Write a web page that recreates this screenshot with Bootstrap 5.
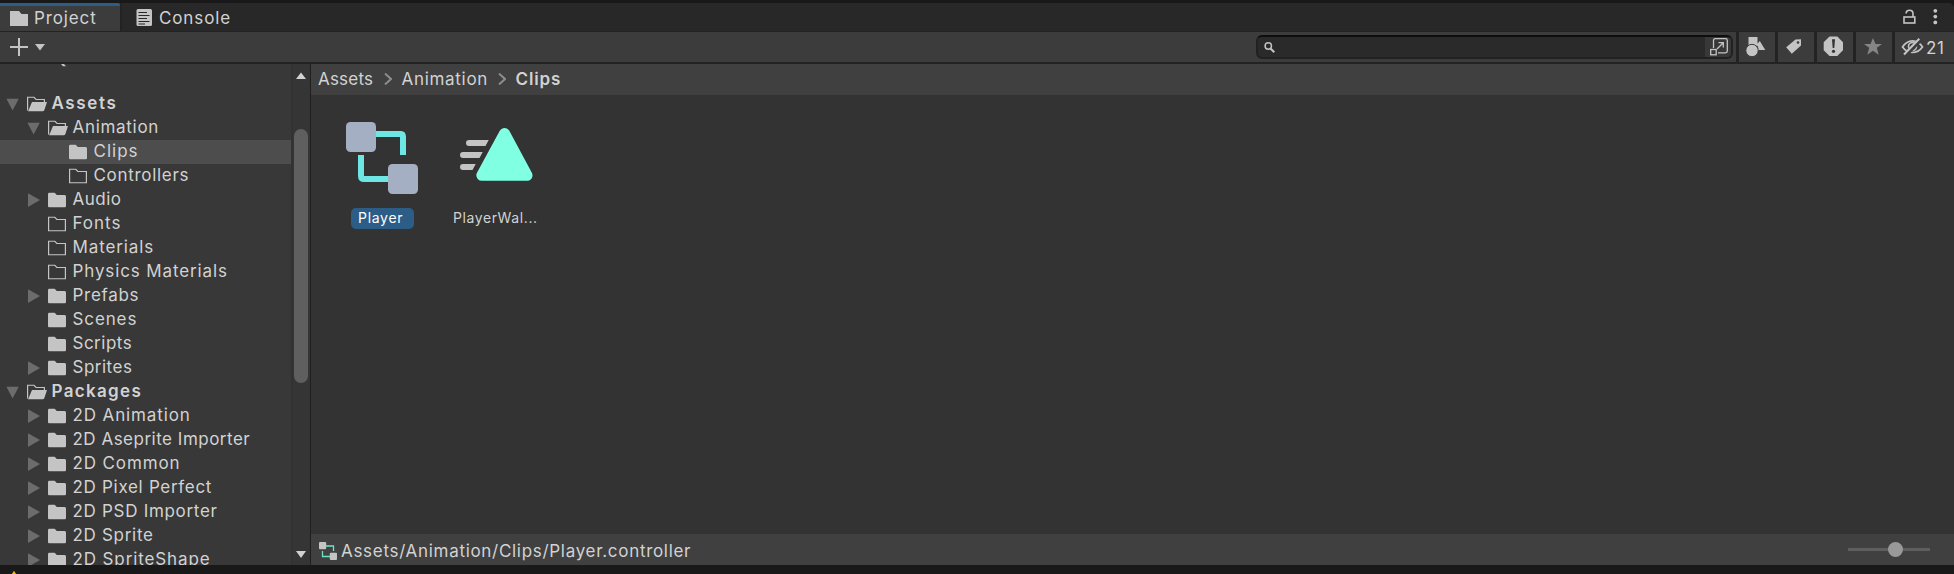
<!DOCTYPE html>
<html lang="en">
<head>
<meta charset="utf-8">
<title>Project</title>
<link rel="stylesheet" href="https://cdn.jsdelivr.net/npm/bootstrap@5.3.0/dist/css/bootstrap.min.css">
<style>
:root{--line:#232323;--ink:#c4c4c4}
body{background:#191919;color:#d2d2d2;font-family:Inter,"Liberation Sans",sans-serif;font-size:17px;line-height:21px;letter-spacing:.7px;width:1954px;height:574px}
svg{display:block;flex:none;overflow:visible}
.t5{letter-spacing:.5px}.t9{letter-spacing:.88px}.t10{letter-spacing:1px}
.t13{letter-spacing:1.34px}.t16{letter-spacing:1.63px}.t2{letter-spacing:.2px}
.semi{font-weight:600}
.tabstrip{height:29px;margin-top:3px;background:#282828;border-bottom:1px solid var(--line);border-top-right-radius:5px}
.tab-on{width:120px;background:#3c3c3c;border-top:3px solid #2c5d87;border-top-right-radius:2px;padding-left:10px}
.tab-off{border-left:2px solid var(--line);padding:3px 0 0 14px}
.toolbar{height:32px;background:#3c3c3c;border-bottom:2px solid var(--line)}
.searchbox{width:477px;height:24px;margin:3px 3px 0 0;background:#2a2a2a;border:2px solid #212121;border-top-color:#0d0d0d;border-radius:6px;padding-left:6px;overflow:hidden}
.expand{width:26px;background:#383838;height:20px;padding-left:3px}
.tool{width:39px;border-left:3px solid var(--line);height:30px}
.main{height:501px}
.tree{width:291px;background:#383838}
.treerow{height:24px}
.treerow span{line-height:23px;height:24px;white-space:nowrap}
.chosen{background:#4d4d4d}
.scroller{width:19px;background:#353535;border-left:2px solid #323232}
.thumb{width:14px;height:254px;border-radius:7px;background:#5f5f5f;margin-top:50px}
.content{background:#333;border-left:1px solid #1f1f1f}
.crumbs,.status{height:31px;background:#404040}
.crumbs span{margin-top:5px}
.assets{padding:23px 0 0 20px}
.asset{width:110px;font-size:14px;letter-spacing:.6px}
.caption{height:21px;line-height:20px;padding:0 7px}
.picked{background:#2c5d87;color:#fff;border-radius:5px;width:63px;padding:0 0 0 7px;letter-spacing:.7px}
.track{width:82px;height:3px;background:#5e5e5e;margin-right:24px}
.knob{width:15px;height:15px;border-radius:50%;background:#999;margin-left:40px;top:-6px}
</style>
<script src="https://cdn.jsdelivr.net/npm/bootstrap@5.3.0/dist/js/bootstrap.bundle.min.js"></script>
</head>
<body class="overflow-hidden m-0">
<svg width="0" height="0" class="position-absolute" aria-hidden="true">
  <symbol id="full" viewBox="0 0 18 15"><path d="M0 1.5Q0 0 1.5 0H6.5L8.8 2.5H16.6Q18 2.5 18 4V13.5Q18 15 16.5 15H1.5Q0 15 0 13.5Z" fill="#c4c4c4"/></symbol>
  <symbol id="hollow" viewBox="0 0 18 15"><path d="M.6.6H6.6L8.8 3H17.4V14.4H.6Z" fill="none" stroke="#c4c4c4" stroke-width="1.2"/></symbol>
  <symbol id="open" viewBox="0 0 20 15"><path d="M.6 14V.6H6.8L9 3H17.4V6" fill="none" stroke="#c4c4c4" stroke-width="1.2"/><path d="M5 5.5H20L17.4 13.6Q17 15 15.5 15H1Z" fill="#c4c4c4"/></symbol>
  <symbol id="shut" viewBox="0 0 12 14"><path d="M0 0L12 6.8L0 13.6Z" fill="#6c6c6c"/></symbol>
  <symbol id="down" viewBox="0 0 13 12"><path d="M0 0H12.6L6.3 12Z" fill="#6c6c6c"/></symbol>
  <symbol id="chev" viewBox="0 0 8 12"><path d="M1 .6L7 6L1 11.4" fill="none" stroke="#8e8e8e" stroke-width="2"/></symbol>
</svg>

<div class="tabstrip d-flex">
  <div class="tab-on d-flex">
    <svg width="18" height="15" style="margin-top:5px"><path d="M0 0H9L11.5 3H18V15H0Z" fill="#c4c4c4"/></svg>
    <span class="t9" style="padding-left:6px;margin-top:2px">Project</span>
  </div>
  <div class="tab-off d-flex">
    <svg width="16" height="17" style="margin-top:3px"><rect x=".5" width="15.5" height="17" rx="1.5" fill="#c4c4c4"/><path d="M2.5 3.5H11M2.5 6.5H13.5M2.5 9.5H11M2.5 12.5H13.5M2.5 15H9" stroke="#282828" stroke-width="1.2"/></svg>
    <span class="t9" style="padding-left:7px;margin-top:2px">Console</span>
  </div>
  <svg class="ms-auto" width="51" height="28"><g fill="none" stroke="#c4c4c4" stroke-width="1.6"><rect x="1" y="14" width="10.8" height="6"/><path d="M3.2 10.5V9.8Q3.5 7.2 6.5 7.2Q10 7.2 10 10.5V14"/></g><g fill="#c4c4c4"><circle cx="32.3" cy="7.8" r="1.9"/><circle cx="32.3" cy="13.6" r="1.9"/><circle cx="32.3" cy="19.4" r="1.9"/></g></svg>
</div>

<div class="toolbar d-flex">
  <svg width="60" height="30"><path d="M19 6V24M10 15H28" stroke="#c4c4c4" stroke-width="2"/><path d="M35 12H45L40 18.5Z" fill="#c4c4c4"/></svg>
  <div class="searchbox d-flex ms-auto">
    <svg width="12" height="20"><circle cx="4.3" cy="9" r="3.2" fill="none" stroke="#c4c4c4" stroke-width="1.5"/><path d="M6.5 11.5L10.3 15.3" stroke="#c4c4c4" stroke-width="2"/></svg>
    <div class="expand ms-auto"><svg width="20" height="20" style="margin-left:1px"><g fill="none" stroke="#c4c4c4" stroke-width="1.3"><path d="M4.5 11V3.5Q4.5 1.7 6.3 1.7H16.5Q18.3 1.7 18.3 3.5V14Q18.3 15.8 16.5 15.8H9"/><rect x="1.7" y="12.5" width="5.5" height="5.3"/><path d="M8 12L14 6M9.5 5.6H14.3V10.4"/></g></svg></div>
  </div>
  <div class="tool"><svg width="36" height="30" fill="#c4c4c4"><path d="M9.5 5H18.5V13.8H9.5ZM20.8 9L26.3 18H19Q19.8 14.5 17.5 12.8Z"/><circle cx="13" cy="18.5" r="6.2" stroke="#3c3c3c"/></svg></div>
  <div class="tool"><svg width="36" height="30"><path d="M17.5 8L23 7.8V14L13.8 22.3L8.2 15.7Z" transform="translate(0 -.5)" fill="#c4c4c4"/><circle cx="20" cy="10.5" r="1.3" fill="#3c3c3c"/></svg></div>
  <div class="tool"><svg width="36" height="30"><path d="M12.5 4.5H20.3L26 10.3V18.2L20.3 24H12.5L6.7 18.2V10.3Z" fill="#c4c4c4"/><path d="M15 7.3H18L17.3 16H15.7Z" fill="#333"/><circle cx="16.5" cy="19.3" r="1.6" fill="#333"/></svg></div>
  <div class="tool"><svg width="36" height="30"><path d="M17 6L19.5 12H26L20.8 15.7L22.7 22.7L17 18.7L11.3 22.7L13.2 15.7L8 12H14.5Z" fill="#858585"/></svg></div>
  <div class="tool d-flex" style="width:62px">
    <svg width="31" height="30"><g fill="none" stroke="#c4c4c4"><path d="M7.5 15Q11.5 8.8 17.5 8.8Q23.5 8.8 27.5 15Q23.5 20.5 17.5 20.5Q11.5 20.5 7.5 15Z" stroke-width="1.7"/><circle cx="17.5" cy="14.5" r="4" stroke-width="1.6"/><path d="M10.5 23L25.8 7.2" stroke="#3c3c3c" stroke-width="4.5"/><path d="M9 22.5L24.3 6.7" stroke-width="2"/></g></svg>
    <span style="padding-top:6px">21</span>
  </div>
</div>

<div class="main d-flex overflow-hidden">
  <div class="tree overflow-hidden" id="tree">
    <svg width="291" height="28"><path d="M61 0H64L66 2.3H63Z" fill="#c4c4c4"/></svg>
  </div>
  <div class="scroller d-flex flex-column">
    <svg width="17" height="15" style="margin-left:1px"><path d="M2 15H12L7 8.5Z" fill="#d2d2d2"/></svg>
    <div class="thumb" style="margin-left:1px"></div>
    <svg class="mt-auto" width="17" height="14" style="margin-left:1px"><path d="M2 0H12L7 7Z" fill="#d2d2d2"/></svg>
  </div>
  <div class="content flex-grow-1 d-flex flex-column">
    <div class="crumbs d-flex">
      <span class="t2" style="margin-left:7px;width:66px">Assets</span>
      <svg width="8" height="12" style="margin:9px 9.5px 0 0"><use href="#chev"/></svg>
      <span style="width:96.5px">Animation</span>
      <svg width="8" height="12" style="margin:9px 9.5px 0 0"><use href="#chev"/></svg>
      <span class="semi t9">Clips</span>
    </div>
    <div class="assets d-flex flex-grow-1">
      <div class="asset d-flex flex-column align-items-start">
        <svg width="110" height="86"><path d="M44 15H70Q72 15 72 18V36M30 36V57Q30 60 33 60H60" transform="translate(0 1)" fill="none" stroke="#6ee7e4" stroke-width="6"/><rect x="15" y="4" width="30" height="30" rx="4.5" fill="#a5afc4"/><rect x="57" y="46" width="30" height="30" rx="4.5" fill="#a5afc4"/></svg>
        <div class="caption picked" style="margin:4px 0 0 20px">Player</div>
      </div>
      <div class="asset d-flex flex-column align-items-start">
        <svg width="110" height="86"><path d="M63.6 15L86 56.8H40.8Z" transform="translate(0 .5)" fill="#80ffe2" stroke="#80ffe2" stroke-width="11" stroke-linejoin="round"/><path d="M28 22H47.7L44.5 28H28A3 3 0 0 1 28 22ZM22 34H41.7L38.5 40H22A3 3 0 0 1 22 34ZM22 46H34.7L31.5 52H22A3 3 0 0 1 22 46Z" fill="#c4c4c4"/></svg>
        <div class="caption" style="margin:4px 0 0 5px">PlayerWal...</div>
      </div>
    </div>
    <div class="status d-flex">
      <svg width="18" height="18" style="margin:8px 4px 0 8px"><path d="M7 4H14.5V9M3.5 9V14.5H12" fill="none" stroke="#6fe3c8" stroke-width="1.3"/><rect width="7.2" height="7.2" rx="1" fill="#c4c4c4"/><rect x="10.8" y="10.8" width="7.2" height="7.2" rx="1" fill="#c4c4c4"/></svg>
      <span style="margin-top:7px">Assets/Animation/Clips/Player.controller</span>
      <div class="track ms-auto" style="margin-top:14px"><div class="knob position-relative"></div></div>
    </div>
  </div>
</div>
<svg width="30" height="9"><path d="M14 6.5L18 13H10Z" fill="#f4bc02" stroke="#f4bc02" stroke-linejoin="round"/></svg>

<script>
// [depth, arrow, folder icon, name, tracking class]
const rows = [
  [0,'down','open','Assets','semi t16'],[1,'down','open','Animation',''],[2,'','full','Clips','t10'],
  [2,'','hollow','Controllers',''],[1,'shut','full','Audio','t5'],[1,'','hollow','Fonts','t10'],
  [1,'','hollow','Materials','t9'],[1,'','hollow','Physics Materials','t9'],[1,'shut','full','Prefabs',''],
  [1,'','full','Scenes','t9'],[1,'','full','Scripts','t5'],[1,'shut','full','Sprites','t5'],
  [0,'down','open','Packages','semi t13'],[1,'shut','full','2D Animation','t9'],
  [1,'shut','full','2D Aseprite Importer','t5'],[1,'shut','full','2D Common','t9'],
  [1,'shut','full','2D Pixel Perfect',''],[1,'shut','full','2D PSD Importer',''],
  [1,'shut','full','2D Sprite',''],[1,'shut','full','2D SpriteShape','t9']
];
const tree = document.getElementById('tree');
for (const [depth, arrow, icon, name, track] of rows) {
  const w = icon === 'open' ? 20 : 18;
  const row = document.createElement('div');
  row.className = 'treerow d-flex' + (name === 'Clips' ? ' chosen' : '');
  row.style.paddingLeft = (6 + 21 * depth) + 'px';
  row.innerHTML =
    `<svg width="21" height="24">${arrow ? `<use href="#${arrow}" x="${arrow === 'shut' ? 1 : .3}" y="${arrow === 'shut' ? 5.3 : 6.5}" width="${arrow === 'shut' ? 12 : 13}" height="${arrow === 'shut' ? 14 : 12}"/>` : ''}</svg>` +
    `<svg width="24.5" height="24"><use href="#${icon}" y="4.5" width="${w}" height="15"/></svg>` +
    `<span class="${track}">${name}</span>`;
  tree.append(row);
}
</script>
</body>
</html>
